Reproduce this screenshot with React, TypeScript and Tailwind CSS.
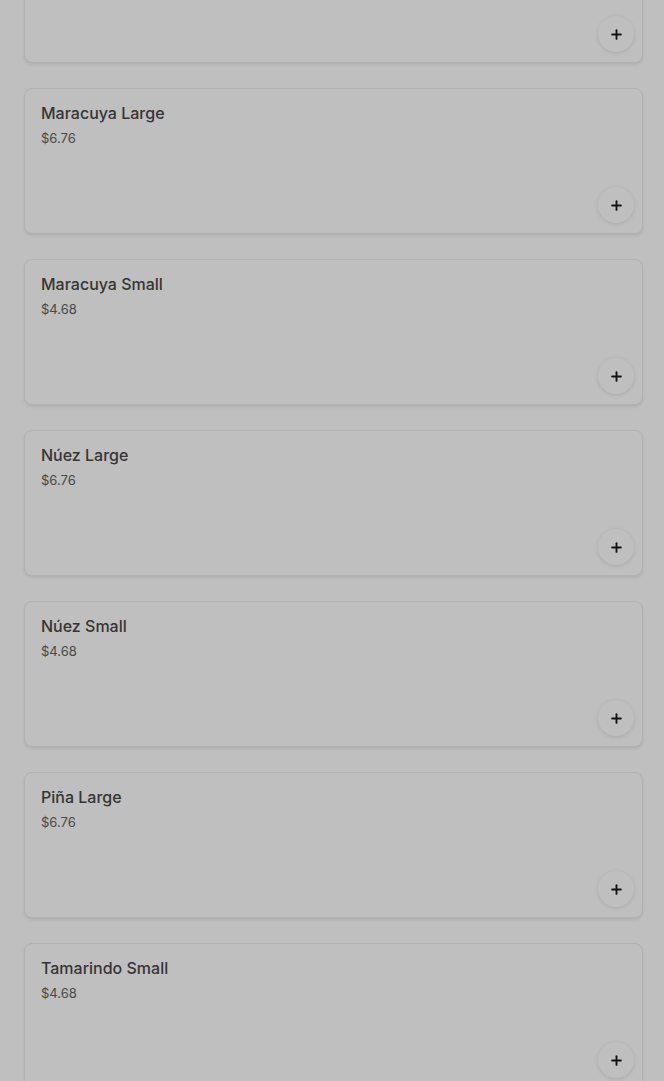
import { Plus } from "lucide-react";

const products = [
  { name: "Maracuya Large", price: 6.76 },
  { name: "Maracuya Small", price: 4.68 },
  { name: "Núez Large", price: 6.76 },
  { name: "Núez Small", price: 4.68 },
  { name: "Piña Large", price: 6.76 },
  { name: "Tamarindo Small", price: 4.68 },
];

function AddButton() {
  return (
    <div className="mt-auto flex justify-end">
      <button className="flex h-9 w-9 items-center justify-center rounded-full bg-white shadow-[0_1px_4px_rgba(0,0,0,0.12)]">
        <Plus size={15} strokeWidth={3} className="text-[#1a1a1a]" />
      </button>
    </div>
  );
}

export default function App() {
  return (
    <div className="relative h-[1081px] overflow-hidden bg-white" style={{ fontFamily: "Inter, 'Liberation Sans', sans-serif" }}>
      {/* Product list (scrolled) */}
      <div className="flex flex-col gap-[25px] pl-[24px] pr-[21px]">
        {/* Card scrolled mostly out of view */}
        <div className="-mt-[83px] flex h-[146px] flex-col rounded-lg border border-[#ececec] bg-white pl-4 pr-[8px] pb-[10px] shadow-[0_2px_3px_rgba(0,0,0,0.08)]">
          <AddButton />
        </div>
        {products.map((product, index) => (
          <div
            key={index}
            className="flex h-[146px] flex-col rounded-lg border border-[#ececec] bg-white pl-4 pr-[8px] pt-3 pb-[10px] shadow-[0_2px_3px_rgba(0,0,0,0.08)]"
          >
            <h3 className="text-base leading-6 font-medium text-[#474747]">{product.name}</h3>
            <p className="mt-[3px] text-[13px] leading-5 text-[#626262]">${product.price.toFixed(2)}</p>
            <AddButton />
          </div>
        ))}
      </div>

      {/* Backdrop */}
      <div className="absolute inset-0 bg-black/25"></div>
    </div>
  );
}
